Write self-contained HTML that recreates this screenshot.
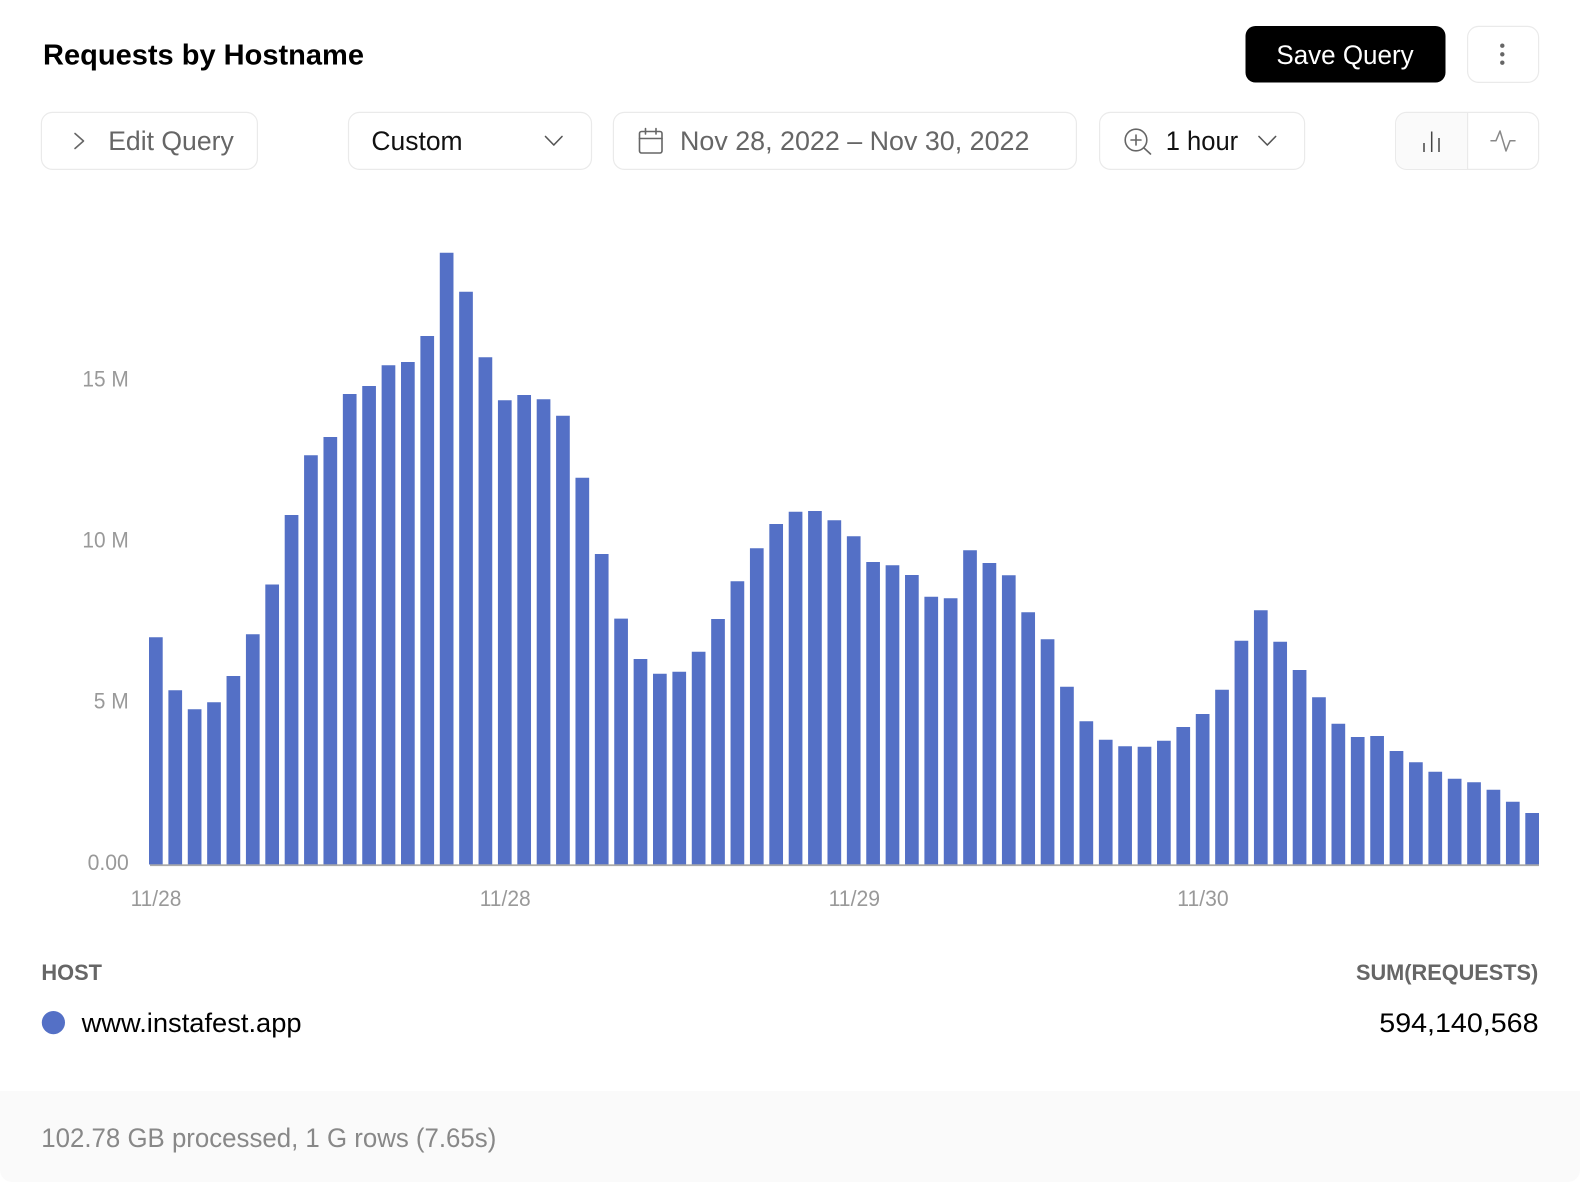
<!DOCTYPE html>
<html lang="en">
<head>
<meta charset="utf-8">
<title>Requests by Hostname</title>
<style>
html,body{margin:0;padding:0;background:#fff;width:1580px;height:1182px;overflow:hidden}
svg{display:block}
text{font-family:"Liberation Sans",sans-serif}
.t{font-size:27px}
.a{font-size:22px;fill:#999}
.h{font-size:22.5px;font-weight:700;fill:#666}
.b{fill:#fff;stroke:#eaeaea;stroke-width:1.2}
.i{fill:none;stroke:#666;stroke-width:1.6;stroke-linecap:round;stroke-linejoin:round}
</style>
</head>
<body>
<svg width="1580" height="1182" viewBox="0 0 1580 1182" xmlns="http://www.w3.org/2000/svg">
<rect width="1580" height="1182" fill="#fff"/>
<path d="M0 1091H1580V1170a12 12 0 0 1-12 12H12a12 12 0 0 1-12-12z" fill="#fafafa"/>

<text x="43" y="64.5" font-size="29" font-weight="700" fill="#000" textLength="321" lengthAdjust="spacingAndGlyphs">Requests by Hostname</text>

<rect x="1245.5" y="26" width="200" height="56.5" rx="10" fill="#000"/>
<text class="t" x="1276.4" y="64" fill="#fff" textLength="137.2" lengthAdjust="spacingAndGlyphs">Save Query</text>

<rect class="b" x="1467.6" y="26.4" width="71" height="56" rx="11"/>
<circle cx="1502.3" cy="45.7" r="2.2" fill="#666"/>
<circle cx="1502.3" cy="54.3" r="2.2" fill="#666"/>
<circle cx="1502.3" cy="62.7" r="2.2" fill="#666"/>

<rect class="b" x="41.4" y="112.4" width="216" height="57" rx="11"/>
<path class="i" d="M75 133.5L83.5 141L75 148.5"/>
<text class="t" x="108.2" y="150" fill="#666" textLength="125.6" lengthAdjust="spacingAndGlyphs">Edit Query</text>

<rect class="b" x="348.5" y="112.4" width="243" height="57" rx="11"/>
<text class="t" x="371.4" y="150" fill="#111" textLength="91.2" lengthAdjust="spacingAndGlyphs">Custom</text>
<path class="i" style="stroke:#555" d="M545.5 136.5L553.8 145L562 136.5"/>

<rect class="b" x="613.4" y="112.4" width="463" height="57" rx="11"/>
<g class="i">
<rect x="639.5" y="131.5" width="22.5" height="21.5" rx="2"/>
<path d="M639.5 138.5H662M645.5 128.5V134M656 128.5V134"/>
</g>
<text class="t" x="680" y="150" fill="#666" textLength="349.4" lengthAdjust="spacingAndGlyphs">Nov 28, 2022 – Nov 30, 2022</text>

<rect class="b" x="1099.6" y="112.4" width="205" height="57" rx="11"/>
<g class="i">
<circle cx="1136" cy="140" r="10.8"/>
<path d="M1144 148L1150.5 154M1136 135V145M1131 140H1141"/>
</g>
<text class="t" x="1165.7" y="150" fill="#111" textLength="72.5" lengthAdjust="spacingAndGlyphs">1 hour</text>
<path class="i" style="stroke:#555" d="M1259 136.5L1267.3 145L1275.6 136.5"/>

<rect class="b" x="1395.6" y="112.4" width="143" height="57" rx="11"/>
<path d="M1468 113H1407a11 11 0 0 0-11 11V158a11 11 0 0 0 11 11H1468z" fill="#fafafa"/>
<path d="M1467.6 112.5V169.5" stroke="#eaeaea" stroke-width="1.2" fill="none"/>
<path d="M1424 143V152M1431.7 131.5V152M1439 138V152" stroke="#444" stroke-width="1.5" fill="none"/>
<path d="M1491 140.7H1496L1500 131L1506 151L1510 140.7H1515" fill="none" stroke="#888" stroke-width="1.5" stroke-linejoin="round" stroke-linecap="round"/>

<text class="a" x="82.4" y="386.6" textLength="46.4" lengthAdjust="spacingAndGlyphs">15 M</text>
<text class="a" x="82.4" y="547.7" textLength="46.4" lengthAdjust="spacingAndGlyphs">10 M</text>
<text class="a" x="93.8" y="708.7" textLength="35" lengthAdjust="spacingAndGlyphs">5 M</text>
<text class="a" x="87.6" y="870" textLength="41.2" lengthAdjust="spacingAndGlyphs">0.00</text>

<path fill="#5470c6" d="M149 637.3h13.7V864.5h-13.7z
M168.39 690.3h13.7V864.5h-13.7z
M187.77 709.3h13.7V864.5h-13.7z
M207.16 702.3h13.7V864.5h-13.7z
M226.54 676h13.7V864.5h-13.7z
M245.93 634.3h13.7V864.5h-13.7z
M265.31 584.5h13.7V864.5h-13.7z
M284.7 515h13.7V864.5h-13.7z
M304.08 455.3h13.7V864.5h-13.7z
M323.47 437h13.7V864.5h-13.7z
M342.85 394h13.7V864.5h-13.7z
M362.24 386h13.7V864.5h-13.7z
M381.62 365.3h13.7V864.5h-13.7z
M401.01 362h13.7V864.5h-13.7z
M420.39 336h13.7V864.5h-13.7z
M439.78 252.7h13.7V864.5h-13.7z
M459.16 291.7h13.7V864.5h-13.7z
M478.55 357.3h13.7V864.5h-13.7z
M497.93 400.3h13.7V864.5h-13.7z
M517.32 395h13.7V864.5h-13.7z
M536.7 399.3h13.7V864.5h-13.7z
M556.09 415.7h13.7V864.5h-13.7z
M575.47 477.7h13.7V864.5h-13.7z
M594.86 554h13.7V864.5h-13.7z
M614.24 618.6h13.7V864.5h-13.7z
M633.63 659h13.7V864.5h-13.7z
M653.01 673.7h13.7V864.5h-13.7z
M672.4 671.7h13.7V864.5h-13.7z
M691.78 651.7h13.7V864.5h-13.7z
M711.17 619h13.7V864.5h-13.7z
M730.55 581.3h13.7V864.5h-13.7z
M749.94 548.3h13.7V864.5h-13.7z
M769.32 524h13.7V864.5h-13.7z
M788.71 511.7h13.7V864.5h-13.7z
M808.09 511h13.7V864.5h-13.7z
M827.48 520.3h13.7V864.5h-13.7z
M846.86 536.3h13.7V864.5h-13.7z
M866.25 562h13.7V864.5h-13.7z
M885.63 565.3h13.7V864.5h-13.7z
M905.02 575h13.7V864.5h-13.7z
M924.4 596.7h13.7V864.5h-13.7z
M943.79 598.3h13.7V864.5h-13.7z
M963.17 550.3h13.7V864.5h-13.7z
M982.56 563h13.7V864.5h-13.7z
M1001.94 575.3h13.7V864.5h-13.7z
M1021.33 612.2h13.7V864.5h-13.7z
M1040.71 639.3h13.7V864.5h-13.7z
M1060.1 686.8h13.7V864.5h-13.7z
M1079.48 721.3h13.7V864.5h-13.7z
M1098.87 739.7h13.7V864.5h-13.7z
M1118.25 746.3h13.7V864.5h-13.7z
M1137.64 746.8h13.7V864.5h-13.7z
M1157.02 740.7h13.7V864.5h-13.7z
M1176.41 727h13.7V864.5h-13.7z
M1195.79 714h13.7V864.5h-13.7z
M1215.18 689.7h13.7V864.5h-13.7z
M1234.56 640.7h13.7V864.5h-13.7z
M1253.95 610.3h13.7V864.5h-13.7z
M1273.33 641.7h13.7V864.5h-13.7z
M1292.72 670h13.7V864.5h-13.7z
M1312.1 697.3h13.7V864.5h-13.7z
M1331.49 723.7h13.7V864.5h-13.7z
M1350.87 737h13.7V864.5h-13.7z
M1370.26 736h13.7V864.5h-13.7z
M1389.64 751h13.7V864.5h-13.7z
M1409.03 762.3h13.7V864.5h-13.7z
M1428.41 771.7h13.7V864.5h-13.7z
M1447.8 778.7h13.7V864.5h-13.7z
M1467.18 782.3h13.7V864.5h-13.7z
M1486.57 789.7h13.7V864.5h-13.7z
M1505.95 801.7h13.7V864.5h-13.7z
M1525.3 813h13.7V864.5h-13.7z"/>
<rect x="150" y="864.3" width="1389" height="1.8" fill="#aaa"/>

<text class="a" x="130.6" y="906" textLength="50.8" lengthAdjust="spacingAndGlyphs">11/28</text>
<text class="a" x="479.7" y="906" textLength="51" lengthAdjust="spacingAndGlyphs">11/28</text>
<text class="a" x="828.6" y="906" textLength="51.4" lengthAdjust="spacingAndGlyphs">11/29</text>
<text class="a" x="1177.3" y="906" textLength="51.4" lengthAdjust="spacingAndGlyphs">11/30</text>

<text class="h" x="41.4" y="980" textLength="60.6" lengthAdjust="spacingAndGlyphs">HOST</text>
<text class="h" x="1356" y="980" textLength="182.3" lengthAdjust="spacingAndGlyphs">SUM(REQUESTS)</text>

<circle cx="53.4" cy="1022.6" r="11.6" fill="#5470c6"/>
<text class="t" x="81.6" y="1032" fill="#000" textLength="220" lengthAdjust="spacingAndGlyphs">www.instafest.app</text>
<text class="t" x="1379.3" y="1032" fill="#000" textLength="159.2" lengthAdjust="spacingAndGlyphs">594,140,568</text>

<text class="t" x="41.3" y="1147" fill="#888" textLength="455" lengthAdjust="spacingAndGlyphs">102.78 GB processed, 1 G rows (7.65s)</text>
</svg>
</body>
</html>
